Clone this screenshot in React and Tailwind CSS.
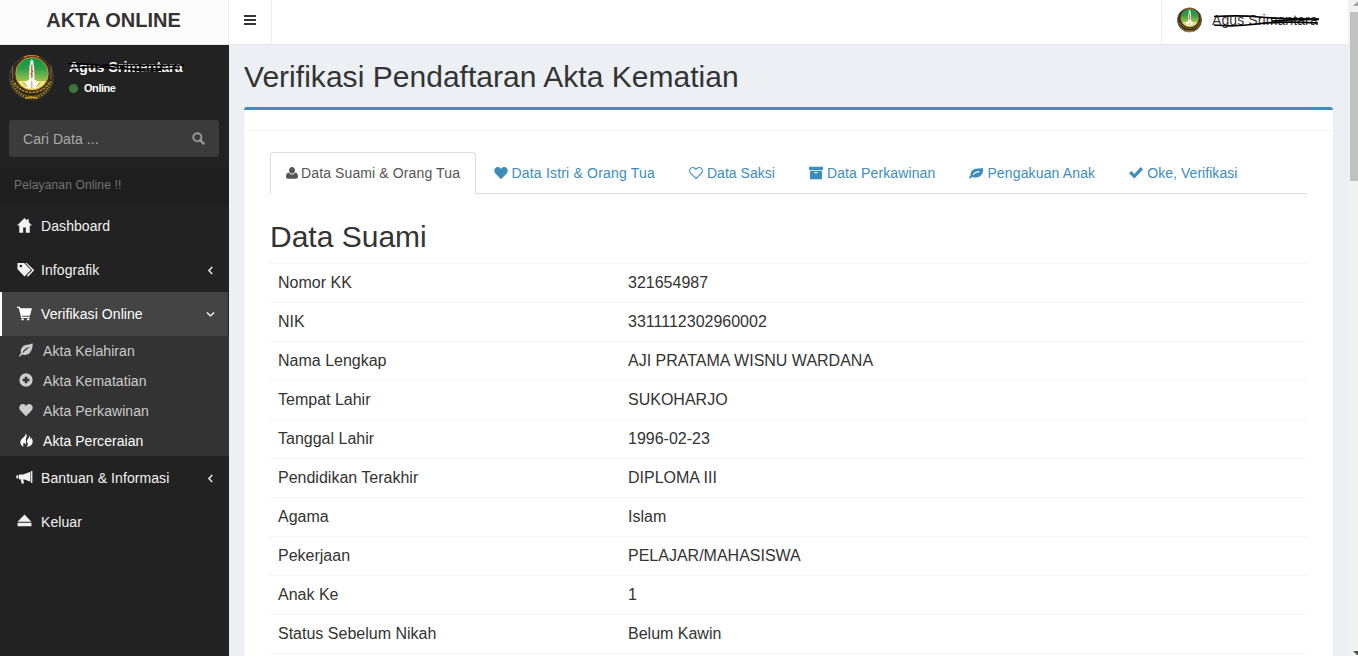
import React from "react";

function Icon({ name, className }) {
  const shapes = {
    home: <path d="M8 0 0 8h2.4v7.6h4.2V10h2.8v5.6h4.2V8H16l-3.4-3.4V1.2h-2V2.6z" />,
    tags: (
      <>
        <path fillRule="evenodd" d="M0 1h6.2l6.4 6.6-6 6L0 6.8zM3.2 2.6a1.2 1.2 0 1 0 0 2.4 1.2 1.2 0 0 0 0-2.4z" />
        <path d="M7.4 1h1.4l7 6.8-6 6-1-1 5-5z" />
      </>
    ),
    cart: (
      <>
        <path d="M0 .8h3l.6 1.5H16l-2.2 8.2H5.300l.3.9h7.900v1.400H4.500L1.900 2.200H0z" />
        <path d="M4.600 13.200h2.600v2.100H4.600zM10.600 13.200h2.600v2.100h-2.600z" />
      </>
    ),
    leaf: <path fillRule="evenodd" d="M15.6.4C12 2.4 7 1.6 4.2 4.2 2 6.2 1.6 9 2.3 11.4L0 14.8l.9 1 2.6-2.6c3.4 1 7.2.3 9.4-2.6 2.1-2.8 2.9-6.2 2.7-10.2zM4 10.5C5.8 7 9 5 12.9 4.2 10.2 6.2 7 8 4.9 11.2z" />,
    plus: <path fillRule="evenodd" d="M8 .4a7.6 7.6 0 1 0 0 15.2A7.6 7.6 0 0 0 8 .4zM6.6 4.2h2.8v2.4h2.4v2.8H9.4v2.4H6.6V9.4H4.2V6.6h2.4z" />,
    heart: <path d="M8 15 1.6 8.6C-1 5.6.6 1.4 4.3 1.2 6 1.1 7.4 2.1 8 3.4c.6-1.3 2-2.3 3.7-2.2 3.7.2 5.3 4.4 2.7 7.4z" />,
    heartOutline: <path fill="none" stroke="currentColor" strokeWidth="1.2" d="M8 14.2 1.9 8.5C-.6 5.8.8 1.9 4.1 1.7 6 1.6 7.2 2.7 8 3.8c.8-1.1 2-2.2 3.9-2.1 3.3.2 4.7 4.1 2.2 6.8z" />,
    fire: (
      <>
        <path d="M7.600 0C8.600 2.800 4.600 5 2.600 7.600.4 10.600 1.800 14.200 5.400 15.700 4.400 13.800 4.600 12 5.800 10.200c.2 1.400.9 1.900 1.500 3C9.700 9.600 6.600 8.200 8.200 5.600 9.200 3.800 9 1.600 7.600 0z" />
        <path d="M11.800 2.600c.8 2.600-2.800 4.400-2.600 7 .1 1.500 1.400 2.300.8 4-.2.900-.9 1.600-1.800 2.100 4 .4 7.100-1.900 7.400-5.300.2-2.200-.7-3.800-1.800-5.200.1 1.100-.2 2-.8 2.600.2-2-.2-4-1.200-5.200z" />
      </>
    ),
    bullhorn: (
      <>
        <path d="M15 1h1.400v12.800H15zM14.300 1.900v10.700L8.200 10H6.600l.9 4.400H5L3.800 9.800H2V4.700h4.600z" />
        <path d="M-.8 6 1.300 5.200v4.200l-2.100-.8z" />
      </>
    ),
    eject: <path d="m8 .4 7.4 7.8H.6zM.6 9.2h14.8v3.9H.6z" />,
    user: <path d="M8 0c2.4 0 4 1.8 4 4.2S10.2 8.8 8 8.8 4 6.6 4 4.2 5.6 0 8 0zM3.8 7.3C4.9 9 6.3 10 8 10s3.1-1 4.2-2.7c3 .5 3.8 3 3.8 5.6 0 1.7-1.1 2.6-2.6 2.6H2.6C1.1 15.5 0 14.6 0 12.9c0-2.6.8-5.1 3.8-5.6z" />,
    archive: <path fillRule="evenodd" d="M0 .8h16v3.7H0zM1.1 5.5h13.8V15H1.1zm5.1 1.3v1.4h3.6V6.8z" />,
    leafTab: <path fillRule="evenodd" d="M15.5 1.6c-1.300 1.700-5 .6-8.300 1.600C3.600 4.300 1.500 6.800 1.900 10.200L0 13.200l1 1.500 2.600-2.200c4.800 1.700 10.200.1 11.900-4.600.8-2.200.8-4.400 0-6.300zM4 10.200C5.800 7.200 8 5.700 12 5.700V7c-3.400 0-5.300 1.200-7 3.600z" />,
    check: <path d="M13.4 1.200 16 3.800 6.200 14.200 0 8.200l2.500-2.600 3.600 3.500z" />,
    chevronLeft: <path fill="none" stroke="currentColor" strokeWidth="1.7" d="M10.2 3.8 6 8l4.2 4.2" />,
    chevronDown: <path fill="none" stroke="currentColor" strokeWidth="1.7" d="M3.6 5.400 8 9.700l4.400-4.300" />,
    bars: <path d="M1.100 2.300h13.700v2.300H1.100zM1.100 6.900h13.700v2.300H1.100zM1.100 11.500h13.700v2.300H1.100z" />,
    search: (
      <>
        <circle cx="6.6" cy="6.5" r="5" fill="none" stroke="currentColor" strokeWidth="2.300" />
        <path d="m10 10 4.400 4.300" fill="none" stroke="currentColor" strokeWidth="2.700" strokeLinecap="round" />
      </>
    ),
  };
  return (
    <svg viewBox="0 0 16 16" fill="currentColor" overflow="visible" className={className} aria-hidden="true">
      {shapes[name]}
    </svg>
  );
}

function Emblem({ className, id }) {
  return (
    <svg viewBox="0 0 44 44" className={className} aria-hidden="true">
      <defs>
        <linearGradient id={id} x1="0" y1="0" x2="0" y2="1">
          <stop offset="0" stopColor="#05984a" />
          <stop offset=".35" stopColor="#2f9f47" />
          <stop offset=".75" stopColor="#a2c84a" />
        </linearGradient>
        <clipPath id={`${id}-disc`}>
          <circle cx="22.500" cy="18.300" r="15.900" />
        </clipPath>
      </defs>
      <circle cx="22" cy="22" r="21.300" fill="#2a2521" stroke="#5f5233" strokeWidth=".8" />
      <path d="M14.500 2.200Q22-.6 29.500 2.200" fill="none" stroke="#c98a1c" strokeWidth="1.500" />
      <path d="M3.500 11v13M41 11v13" fill="none" stroke="#77706a" strokeWidth="1" />
      <path d="M3 25Q5 34 12 38.500 22 44 32 38.500 39 34 41 25" fill="none" stroke="#8d781c" strokeWidth="3" strokeDasharray="1.500 1.100" />
      <path d="M5.500 27q5 9 16.500 9.700Q34 36 39 27" fill="none" stroke="#b59a20" strokeWidth="1.500" strokeDasharray="2.500 1" />
      <path d="M16 42.300q6-2 12 0" fill="none" stroke="#d9a32c" strokeWidth="1.300" />
      <g clipPath={`url(#${id}-disc)`}>
        <circle cx="22.500" cy="18.300" r="16" fill={`url(#${id})`} />
        <path d="M6 25.500h33V36H6z" fill="#e7e976" />
        <path d="M20.700 6 22.300 3.800 23.900 6v4h.6l.6 15.500h-5.600l.6-15.500h.6z" fill="#f4f6f0" />
        <path d="M22.300 9.500v13M21.600 13.500l1.500 2.500-1.500 2.500 1.500 2" fill="none" stroke="#d8453c" strokeWidth="1.200" />
        <path d="m15.500 26 4.500-1.800 2.300-1.400 2.300 1.400 4.500 1.800-1.800 6.500H17.300z" fill="#fffef0" />
        <path d="M22.300 25.500v7M14 27l4 4M30.600 27l-4 4" fill="none" stroke="#917634" strokeWidth=".7" />
      </g>
      <circle cx="22.500" cy="18.300" r="16" fill="none" stroke="#e0a12b" strokeWidth=".9" />
      <circle cx="22.500" cy="18.300" r="17" fill="none" stroke="#6d2a1b" strokeWidth=".9" />
    </svg>
  );
}

function MenuItem({ icon, label, arrow, active }) {
  return (
    <a
      className={
        active
          ? "mr-px flex h-11 items-center border-l-2 border-white bg-[#444] pl-[15px] pr-[11px] text-white"
          : "flex h-11 items-center pl-[17px] pr-3 text-[#f2f2f2]"
      }
    >
      <Icon name={icon} className={icon === "tags" ? "mr-1.5 h-[17px] w-[18px]" : "mb-0.5 mr-[9px] h-[15px] w-[15px]"} />
      <span className="flex-1 tracking-[0.08px]">{label}</span>
      {arrow && <Icon name={arrow} className="h-[13px] w-[13px]" />}
    </a>
  );
}

const submenu = [
  ["leaf", "Akta Kelahiran"],
  ["plus", "Akta Kematatian"],
  ["heart", "Akta Perkawinan"],
  ["fire", "Akta Perceraian"],
];

const tabs = [
  ["heart", "Data Istri & Orang Tua", "tracking-[0.19px]"],
  ["heartOutline", "Data Saksi", "tracking-[0.03px]"],
  ["archive", "Data Perkawinan", "tracking-[0.12px]"],
  ["leafTab", "Pengakuan Anak", "tracking-[0.14px]"],
  ["check", "Oke, Verifikasi", "tracking-[0.05px]"],
];

const rows = [
  ["Nomor KK", "321654987"],
  ["NIK", "3311112302960002"],
  ["Nama Lengkap", "AJI PRATAMA WISNU WARDANA"],
  ["Tempat Lahir", "SUKOHARJO"],
  ["Tanggal Lahir", "1996-02-23"],
  ["Pendidikan Terakhir", "DIPLOMA III"],
  ["Agama", "Islam"],
  ["Pekerjaan", "PELAJAR/MAHASISWA"],
  ["Anak Ke", "1"],
  ["Status Sebelum Nikah", "Belum Kawin"],
];

function Sidebar() {
  return (
    <aside className="flex w-[229px] shrink-0 flex-col bg-[#222]">
      <div className="flex h-[75px] pl-[9px] pt-2.5">
        <Emblem id="emblem-side" className="h-[45px] w-[45px] shrink-0" />
        <div className="pl-[15px] pt-0.5 text-white">
          <div className="relative w-max text-[14px] font-bold leading-5 tracking-[0.1px]">
            Agus Srimantara
            <svg viewBox="0 0 118 12" className="absolute -left-px top-1 h-3 w-[118px]" aria-hidden="true">
              <path d="M0 2.500C18 3 34 5 58 4.500S90 5 116 4M2 7Q28 5 46 7T112 7M52 6Q76 12 94 9" fill="none" stroke="#000" strokeWidth="1.700" />
            </svg>
          </div>
          <div className="mt-[3px] flex items-center text-[11px] font-bold leading-4 tracking-[-0.45px]">
            <span className="mr-1.5 h-[9px] w-[9px] rounded-full bg-[#3c763d]" />
            Online
          </div>
        </div>
      </div>
      <div className="mx-[9px] mr-2.5 flex h-[37px] items-center justify-between rounded-[3px] bg-[#3b3b3b] pl-3.5 pr-[14px] text-[#aaa]">
        <span className="tracking-[0.07px]">Cari Data ...</span>
        <Icon name="search" className="h-[13px] w-[13px] text-[#999]" />
      </div>
      <div className="mt-2.5 flex h-[37px] items-center bg-[#1e1e1e] pb-0.5 pl-3.5 text-[12px] tracking-[0.14px] text-[#747474]">
        Pelayanan Online !!
      </div>
      <nav>
        <MenuItem icon="home" label="Dashboard" />
        <MenuItem icon="tags" label="Infografik" arrow="chevronLeft" />
        <MenuItem icon="cart" label="Verifikasi Online" arrow="chevronDown" active />
        <div className="bg-[#333]">
          {submenu.map(([icon, label]) => (
            <a
              key={label}
              className={
                label === "Akta Perceraian"
                  ? "flex h-[30px] items-center pl-[19px] tracking-[0.05px] text-white"
                  : "flex h-[30px] items-center pl-[19px] tracking-[0.05px] text-[#ccc]"
              }
            >
              <Icon name={icon} className="mb-0.5 mr-2.5 h-3.5 w-3.5" />
              {label}
            </a>
          ))}
        </div>
        <MenuItem icon="bullhorn" label="Bantuan & Informasi" arrow="chevronLeft" />
        <MenuItem icon="eject" label="Keluar" />
      </nav>
    </aside>
  );
}

function Header() {
  return (
    <header className="flex h-[45px] shrink-0 border-b border-[#e3e6ea] bg-white">
      <div className="flex w-[229px] justify-center border-r border-[#eee] bg-[#fcfcfc] pr-px pt-[5px] text-[20px] font-bold leading-[30px]">
        AKTA ONLINE
      </div>
      <div className="flex w-[43px] justify-center border-r border-[#eee] pt-[13px]">
        <Icon name="bars" className="h-[14px] w-[14px]" />
      </div>
      <div className="ml-auto flex w-[187px] border-l border-[#eee] pl-[15px] pt-[7px]">
        <Emblem id="emblem-top" className="h-[26px] w-[25px]" />
        <div className="relative ml-2.5 h-5 leading-[26px] tracking-[0.1px]">
          Agus Srimantara
          <svg viewBox="0 0 110 14" className="absolute left-0 top-2 h-3.5 w-[110px]" aria-hidden="true">
            <path d="M2 1.500Q28 0 48 2T107 4M2 10Q22 12 45 9T106 8M60 6Q85 4 107 4.500" fill="none" stroke="#000" strokeWidth="1.700" />
          </svg>
        </div>
      </div>
    </header>
  );
}

export default function App() {
  return (
    <div className="flex h-[656px] w-[1358px] overflow-hidden bg-[#ecf0f5] font-['Liberation_Sans',Arial,sans-serif] text-[14px] leading-5 text-[#333]">
      <div className="flex min-w-0 flex-1 flex-col">
        <Header />
        <div className="flex min-h-0 flex-1">
          <Sidebar />
          <main className="min-w-0 flex-1 overflow-hidden pl-[15px] pr-[15px]">
            <h1 className="pt-[15px] text-[30px] leading-[33px] tracking-[0.03px]">Verifikasi Pendaftaran Akta Kematian</h1>
            <section className="mt-3.5 h-[560px] rounded-t-[3px] border-t-[3px] border-[#3c8dbc] bg-white shadow-[0_1px_1px_rgba(0,0,0,0.1)]">
              <div className="h-[21px] border-b border-[#f4f4f4]" />
              <div className="mx-[9px] mt-2.5 border-x border-[#fcfcfc] px-4 pt-[11px]">
                <div className="flex h-[42px] border-b border-[#ddd]">
                  <div className="-mb-px flex w-[206px] items-center rounded-t-[4px] border border-b-0 border-[#ddd] bg-white pb-0.5 pl-[15px] tracking-[0.12px] text-[#555]">
                    <Icon name="user" className="mr-[3px] h-3 w-3" />
                    Data Suami &amp; Orang Tua
                  </div>
                  {tabs.map(([icon, label, tracking]) => (
                    <a key={label} className="mr-[3px] flex items-center gap-1 px-[15.5px] text-[#3c8dbc] first-of-type:ml-[2px]">
                      <Icon name={icon} className="h-3.5 w-3.5" />
                      <span className={tracking}>{label}</span>
                    </a>
                  ))}
                </div>
                <h2 className="mt-[26px] text-[30px] leading-[33px]">Data Suami</h2>
                <table className="mt-2.5 w-full table-fixed border-collapse text-[16px] leading-[22px]">
                  <colgroup>
                    <col className="w-[350px]" />
                    <col />
                  </colgroup>
                  <tbody>
                    {rows.map(([label, value]) => (
                      <tr key={label} className="h-[39px] border-y border-[#f4f4f4]">
                        <td className="px-2">{label}</td>
                        <td className="px-2">{value}</td>
                      </tr>
                    ))}
                  </tbody>
                </table>
              </div>
            </section>
          </main>
        </div>
      </div>
      <div className="flex w-2.5 shrink-0 flex-col items-end overflow-hidden bg-[#f1f1f1]">
        <svg viewBox="0 0 5 12" className="h-3 w-[5px] shrink-0" aria-hidden="true">
          <path d="M0 6 4 2H5V6z" fill="#a3a3a3" />
        </svg>
        <div className="h-[169px] w-2 bg-[#c1c1c1]" />
        <svg viewBox="0 0 5 6" className="mt-auto h-1.5 w-[5px]" aria-hidden="true">
          <path d="M0 1H5V5H4z" fill="#505050" />
        </svg>
      </div>
    </div>
  );
}
